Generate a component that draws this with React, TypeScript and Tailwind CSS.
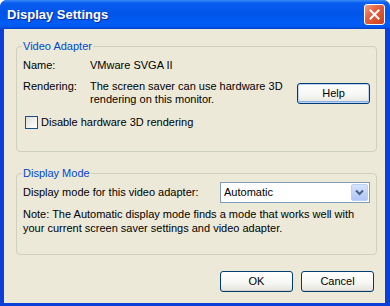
import type { ReactNode } from 'react';

function XpButton({ label, focused }: { label: string; focused?: boolean }) {
  return (
    <button
      className={
        'w-[73px] h-[21px] shrink-0 rounded-[3px] border border-[#003C74] bg-[linear-gradient(to_bottom,#FFFFFF_0%,#F6F6F3_60%,#E3E2DA_100%)] text-[11px] leading-[13px] text-black ' +
        (focused ? 'shadow-[inset_0_0_0_1px_#BCD4F6,inset_0_-1px_0_1px_#89ADE4]' : 'shadow-[inset_0_-1px_0_0_#D6D0C5]')
      }
    >
      {label}
    </button>
  );
}

function GroupBox({ title, className, children }: { title: string; className?: string; children: ReactNode }) {
  return (
    <fieldset className={'rounded-[4px] border border-[#D0D0BF] pl-[5px] pr-[6px] ' + (className ?? '')}>
      <legend className="px-[1px] text-[11px] leading-[13px] text-[#0046D5]">{title}</legend>
      <div className="pl-[1px]">{children}</div>
    </fieldset>
  );
}

export default function App() {
  return (
    <div
      className="w-[390px] h-[306px] flex flex-col overflow-hidden rounded-t-[7px] bg-[#0A3FD8] text-black"
      style={{ fontFamily: '"Liberation Sans", Arial, sans-serif' }}
    >
      {/* title bar */}
      <div className="h-[29px] shrink-0 flex items-center pl-[7px] pr-[5px] bg-[linear-gradient(to_bottom,#3C8CF8_0%,#0A5EEF_10%,#0054E8_45%,#005DF6_80%,#0058EE_92%,#0040C8_100%)]">
        <span className="text-[13px] font-bold text-white [text-shadow:1px_1px_#0A2A9A] leading-none">Display Settings</span>
        <button className="ml-auto w-[21px] h-[21px] rounded-[3px] border border-white bg-[linear-gradient(135deg,#F2A086_0%,#E4603F_40%,#CE3F1B_100%)] flex items-center justify-center">
          <svg width="11" height="11" viewBox="0 0 11 11">
            <path d="M1.5 1.5 L9.5 9.5 M9.5 1.5 L1.5 9.5" stroke="#FFFFFF" strokeWidth="2" strokeLinecap="square" />
          </svg>
        </button>
      </div>

      {/* body */}
      <div className="flex-1 flex flex-col ml-[4px] mr-[5px] mb-[3px] bg-[#ECE9D8] pl-[12px] pr-[8px] text-[11px] leading-[13px]">
        <GroupBox title="Video Adapter" className="mt-[11px] pb-[22px]">
          <div className="flex mt-[6px]">
            <span className="w-[67px] shrink-0">Name:</span>
            <span>VMware SVGA II</span>
          </div>
          <div className="flex mt-[8px]">
            <span className="w-[67px] shrink-0">Rendering:</span>
            <span>
              The screen saver can use hardware 3D
              <br />
              rendering on this monitor.
            </span>
            <div className="ml-auto mt-[3px]">
              <XpButton label="Help" focused />
            </div>
          </div>
          <label className="flex items-center mt-[10px] ml-[2px]">
            <span className="w-[13px] h-[13px] shrink-0 border border-[#1C5180] bg-[linear-gradient(135deg,#DCDCD7_0%,#F4F4F0_60%,#FFFFFF_100%)]" />
            <span className="ml-[3px]">Disable hardware 3D rendering</span>
          </label>
        </GroupBox>

        <GroupBox title="Display Mode" className="mt-[15px] pb-[19px]">
          <div className="flex items-center mt-[2px]">
            <span className="w-[197px] shrink-0">Display mode for this video adapter:</span>
            <div className="w-[150px] h-[21px] flex items-center border border-[#7F9DB9] bg-white pl-[3px] pr-[1px]">
              <span>Automatic</span>
              <span className="ml-auto w-[17px] h-[17px] flex items-center justify-center rounded-[2px] border border-[#B9CEF9] bg-[linear-gradient(to_bottom,#D7E4FD_0%,#BCD0F9_60%,#B1C6F5_100%)]">
                <svg width="9" height="7" viewBox="0 0 9 7">
                  <path d="M1 1.5 L4.5 5 L8 1.5" fill="none" stroke="#4D6185" strokeWidth="2" />
                </svg>
              </span>
            </div>
          </div>
          <p className="mt-[4px] leading-[14px]">
            Note: The Automatic display mode finds a mode that works well with
            <br />
            your current screen saver settings and video adapter.
          </p>
        </GroupBox>

        <div className="flex justify-end gap-[8px] mt-[16px] pr-[3px]">
          <XpButton label="OK" />
          <XpButton label="Cancel" />
        </div>
      </div>
    </div>
  );
}
